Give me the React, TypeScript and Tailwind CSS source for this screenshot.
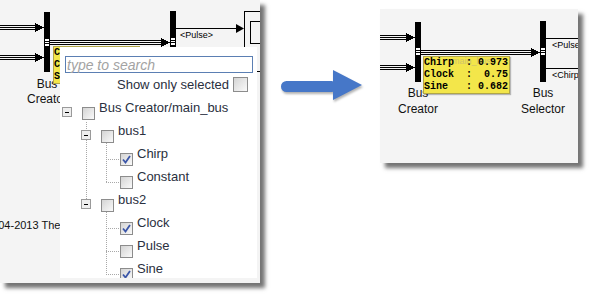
import React from 'react';

type Row = { label: string; level: 0 | 1 | 2; group?: boolean; checked?: boolean };

const rows: Row[] = [
  { label: 'Bus Creator/main_bus', level: 0, group: true },
  { label: 'bus1', level: 1, group: true },
  { label: 'Chirp', level: 2, checked: true },
  { label: 'Constant', level: 2 },
  { label: 'bus2', level: 1, group: true },
  { label: 'Clock', level: 2, checked: true },
  { label: 'Pulse', level: 2 },
  { label: 'Sine', level: 2, checked: true },
];

const indent = { 0: 'pl-[2px]', 1: 'pl-[21px]', 2: 'pl-[40px]' };

// triple line bus with arrow head
function Bus({ x1, x2, y, arrow = true }: { x1: number; x2: number; y: number; arrow?: boolean }) {
  const end = arrow ? x2 - 6 : x2;
  return (
    <g shapeRendering="crispEdges">
      <line x1={x1} x2={end} y1={y - 2} y2={y - 2} stroke="#000" />
      <line x1={x1} x2={end} y1={y} y2={y} stroke="#000" />
      <line x1={x1} x2={end} y1={y + 2} y2={y + 2} stroke="#000" />
      {arrow && <polygon points={`${x2 - 9},${y - 4.5} ${x2},${y} ${x2 - 9},${y + 4.5}`} fill="#000" />}
    </g>
  );
}

function Port({ x, y }: { x: number; y: number }) {
  return (
    <g shapeRendering="crispEdges">
      <rect x={x} y={y} width={4} height={7} fill="#fff" />
      <line x1={x} x2={x + 4} y1={y + 2.5} y2={y + 2.5} stroke="#000" />
      <line x1={x} x2={x + 4} y1={y + 4.5} y2={y + 4.5} stroke="#000" />
    </g>
  );
}

function CheckBox({ checked, big }: { checked?: boolean; big?: boolean }) {
  return (
    <div
      className={`${big ? 'w-[15px] h-[15px]' : 'w-[13px] h-[13px]'} shrink-0 border border-[#8c8c8c] bg-linear-to-br from-[#d4d4d4] to-[#fafafa] flex items-center justify-center`}
    >
      {checked && (
        <svg width="9" height="9" viewBox="0 0 9 9">
          <path d="M1 4.5 L3.5 7.5 L8 1" fill="none" stroke="#3b56a8" strokeWidth="1.8" />
        </svg>
      )}
    </div>
  );
}

function Minus() {
  return (
    <div className="w-[10px] h-[10px] shrink-0 border border-[#9a9a9a] bg-[#eeeeee] flex items-center justify-center">
      <div className="w-[4px] h-[1px] bg-black" />
    </div>
  );
}

function Popup() {
  return (
    <div className="absolute left-[60px] top-[47px] w-[197px] h-[231px] bg-white overflow-hidden font-['Liberation_Sans',Arial,sans-serif] text-[13px] text-[#2a3040]">
      <div className="ml-[5px] mt-[9px] w-[188px] h-[17px] border border-[#5b7fb3] flex items-center px-[1px]">
        <span className="italic text-[14px] text-[#a3a3a3] leading-none">type to search</span>
      </div>
      <div className="flex justify-end items-start pr-[9px] mt-[4px] gap-[4px]">
        <span className="leading-[15px]">Show only selected</span>
        <CheckBox big />
      </div>
      <div className="relative mt-[8px]">
        {/* tree connector dots */}
        <svg className="absolute left-0 top-[-53px]" width="197" height="240">
          <g stroke="#a8a8a8" strokeDasharray="1 1" shapeRendering="crispEdges">
            <line x1="26.5" x2="26.5" y1="75" y2="152" />
            <line x1="46.5" x2="46.5" y1="96" y2="135" />
            <line x1="46" x2="60" y1="112.5" y2="112.5" />
            <line x1="46" x2="60" y1="135.5" y2="135.5" />
            <line x1="46.5" x2="46.5" y1="165" y2="227" />
            <line x1="46" x2="60" y1="181.5" y2="181.5" />
            <line x1="46" x2="60" y1="204.5" y2="204.5" />
            <line x1="46" x2="60" y1="227.5" y2="227.5" />
          </g>
        </svg>
        {rows.map((r) => (
          <div key={r.label} className={`relative flex items-start h-[23px] ${indent[r.level]}`}>
            <div className="w-[10px] mt-[7px]">{r.group && <Minus />}</div>
            <div className="ml-[10px] mt-[7px]">
              <CheckBox checked={r.checked} />
            </div>
            <span className="ml-[4px] leading-[15px] whitespace-nowrap">{r.label}</span>
          </div>
        ))}
      </div>
    </div>
  );
}

function LeftPanel() {
  return (
    <div className="relative shrink-0 w-[260px] h-[283px] bg-[#f4f4f4] overflow-hidden shadow-[5px_5px_4px_rgba(0,0,0,0.55)]">
      <svg className="absolute inset-0" width="260" height="283" fontFamily="'Liberation Sans', Arial, sans-serif">
        <Bus x1={0} x2={44} y={27.5} />
        <Bus x1={0} x2={44} y={57.5} />
        <rect x={44} y={12} width={6} height={60} fill="#000" />
        <Port x={45} y={39} />
        <Bus x1={50} x2={170} y={42.5} />
        <rect x={170} y={11} width={6} height={50} fill="#000" />
        <Port x={171} y={38} />
        <line x1={176} x2={238} y1={28.5} y2={28.5} stroke="#000" shapeRendering="crispEdges" />
        <polygon points="236,24 244,28.5 236,33" fill="#000" />
        <text x={180} y={38} fontSize={9} fill="#000">&lt;Pulse&gt;</text>
        <rect x={244.5} y={11.5} width={30} height={60} fill="none" stroke="#000" shapeRendering="crispEdges" />
        <rect x={250.5} y={21.5} width={20} height={22} fill="none" stroke="#000" shapeRendering="crispEdges" />
        <text x={47} y={88} fontSize={12} textAnchor="middle" fill="#111">Bus</text>
        <text x={47} y={103} fontSize={12} textAnchor="middle" fill="#111">Creator</text>
        <text x={-14} y={229} fontSize={11} fill="#111">2004-2013 The MathWorks, Inc.</text>
      </svg>
      <div className="absolute left-[53px] top-[46px] w-[87px] h-[38px] bg-[#f3e64a] border border-[#b0a648] font-['Liberation_Mono',monospace] font-bold text-[10px] leading-[12px] whitespace-pre">
        <div>Chirp  : 0.973</div>
        <div>Clock  :  0.75</div>
        <div>Sine   : 0.682</div>
      </div>
      <Popup />
    </div>
  );
}

function RightPanel() {
  return (
    <div className="relative shrink-0 ml-[14px] mt-[9px] w-[198px] h-[154px] bg-[#f4f4f4] overflow-hidden shadow-[5px_5px_4px_rgba(0,0,0,0.55)]">
      <svg className="absolute inset-0" width="198" height="154" fontFamily="'Liberation Sans', Arial, sans-serif">
        <Bus x1={0} x2={35} y={28.5} />
        <Bus x1={0} x2={35} y={58.5} />
        <rect x={35} y={13} width={6} height={60} fill="#000" />
        <Port x={36} y={39} />
        <Bus x1={41} x2={160} y={43.5} />
        <rect x={160} y={12} width={6} height={61} fill="#000" />
        <Port x={161} y={39} />
        <line x1={166} x2={198} y1={29.5} y2={29.5} stroke="#000" shapeRendering="crispEdges" />
        <line x1={166} x2={198} y1={59.5} y2={59.5} stroke="#000" shapeRendering="crispEdges" />
        <text x={172} y={39} fontSize={9} fill="#000">&lt;Pulse&gt;</text>
        <text x={172} y={69} fontSize={9} fill="#000">&lt;Chirp&gt;</text>
        <text x={38} y={88} fontSize={12} textAnchor="middle" fill="#111">Bus</text>
        <text x={38} y={104} fontSize={12} textAnchor="middle" fill="#111">Creator</text>
        <text x={163} y={88} fontSize={12} textAnchor="middle" fill="#111">Bus</text>
        <text x={163} y={104} fontSize={12} textAnchor="middle" fill="#111">Selector</text>
      </svg>
      <div className="absolute left-[43px] top-[47px] w-[87px] h-[38px] bg-[#f3e64a] border border-[#b0a648] shadow-[1px_1px_1px_rgba(0,0,0,0.25)] font-['Liberation_Mono',monospace] font-bold text-[10px] leading-[12px] whitespace-pre text-black">
        <span className="absolute left-[28px] top-[-2px] font-['Liberation_Sans',Arial,sans-serif] font-normal text-[9px] text-[#cfc46a]">main_bus</span>
        <div className="relative">Chirp  : 0.973</div>
        <div className="relative">Clock  :  0.75</div>
        <div className="relative">Sine   : 0.682</div>
      </div>
    </div>
  );
}

export default function App() {
  return (
    <div className="w-[596px] h-[295px] bg-white flex items-start overflow-hidden">
      <LeftPanel />
      <svg
        className="shrink-0 ml-[20px] mt-[68px] drop-shadow-[1px_2px_1px_rgba(0,0,0,0.3)]"
        width="86"
        height="34"
        viewBox="0 0 86 34"
      >
        <rect x="1" y="13" width="56" height="11" rx="5.5" fill="#4677c8" />
        <polygon points="53,2 82,17 53,32" fill="#4677c8" />
      </svg>
      <RightPanel />
    </div>
  );
}
